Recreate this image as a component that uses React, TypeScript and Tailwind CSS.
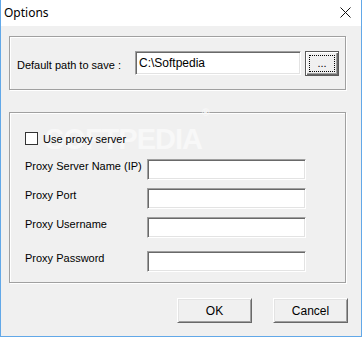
const sunken =
  "bg-white border border-t-[#a0a0a0] border-l-[#a0a0a0] border-b-white border-r-white shadow-[inset_1px_1px_0_#696969,inset_-1px_-1px_0_#e3e3e3]"

const raised =
  "bg-[#f0f0f0] border border-t-white border-l-white border-b-[#696969] border-r-[#696969] shadow-[inset_1px_1px_0_#e3e3e3,inset_-1px_-1px_0_#a0a0a0]"

const groupBox = "border border-[#a0a0a0] shadow-[1px_1px_0_#fff,inset_1px_1px_0_#fff]"

const ProxyRow = ({ label, className }: { label: string; className?: string }) => {
  return (
    <div className={`flex items-start ${className ?? ""}`}>
      <span className="w-[122px] leading-[14px] text-black">{label}</span>
      <div className={`w-[159px] h-[21px] ${sunken}`} />
    </div>
  )
}

const App = () => {
  return (
    <div
      className="w-[362px] h-[337px] flex flex-col bg-[#f0f0f0] border-x border-b border-[#62a8e8] text-[11px] text-black"
      style={{ fontFamily: '"Liberation Sans", Arial, sans-serif' }}
    >
      {/* title bar */}
      <div className="h-[26px] bg-white flex items-center justify-between pl-[3px] pr-[10px]">
        <span className="text-[12px] text-black" style={{ fontFamily: '"Noto Sans", sans-serif' }}>
          Options
        </span>
        <svg width="11" height="11" viewBox="0 0 11 11" className="mb-[1px]">
          <path d="M0.5 0.5 L10.5 10.5 M10.5 0.5 L0.5 10.5" stroke="#111" strokeWidth="1" />
        </svg>
      </div>

      {/* default path */}
      <div className={`ml-[8px] mt-[10px] w-[337px] h-[54px] pt-[14px] pl-[7px] flex items-start ${groupBox}`}>
        <span className="w-[118px] mt-[7px] leading-[14px]">Default path to save :</span>
        <div className={`w-[166px] h-[24px] flex items-center pl-[3px] text-[12px] ${sunken}`}>C:\Softpedia</div>
        <button className="ml-[4px] w-[34px] h-[25px] border border-[#5a5a5a] bg-[#f0f0f0] shadow-[inset_1px_1px_0_#fff,inset_-1px_-1px_0_#696969,inset_-2px_-2px_0_#a0a0a0] p-[3px]">
          <div className="w-full h-full border border-dotted border-black flex items-end justify-center leading-[12px] pb-[2px]">
            ...
          </div>
        </button>
      </div>

      {/* proxy settings */}
      <div className={`relative ml-[8px] mt-[22px] w-[337px] h-[171px] pt-[19px] pl-[15px] flex flex-col ${groupBox}`}>
        <span className="absolute left-[35px] top-[5px] text-[29px] font-bold tracking-[-1px] text-[#f8f8f8] select-none">
          SOFTPEDIA<sup className="text-[10px] align-top">®</sup>
        </span>
        <label className="relative flex items-center h-[13px]">
          <span className="w-[13px] h-[13px] bg-white border border-[#333]" />
          <span className="ml-[5px] leading-[14px]">Use proxy server</span>
        </label>
        <ProxyRow label="Proxy Server Name (IP)" className="mt-[14px]" />
        <ProxyRow label="Proxy Port" className="mt-[8px]" />
        <ProxyRow label="Proxy Username" className="mt-[8px]" />
        <ProxyRow label="Proxy Password" className="mt-[13px]" />
      </div>

      {/* buttons */}
      <div className="mt-[15px] flex justify-end gap-[21px] pr-[13px]">
        <button className={`w-[75px] h-[25px] text-[12px] ${raised}`}>OK</button>
        <button className={`w-[75px] h-[25px] text-[12px] ${raised}`}>Cancel</button>
      </div>
    </div>
  )
}

export default App
